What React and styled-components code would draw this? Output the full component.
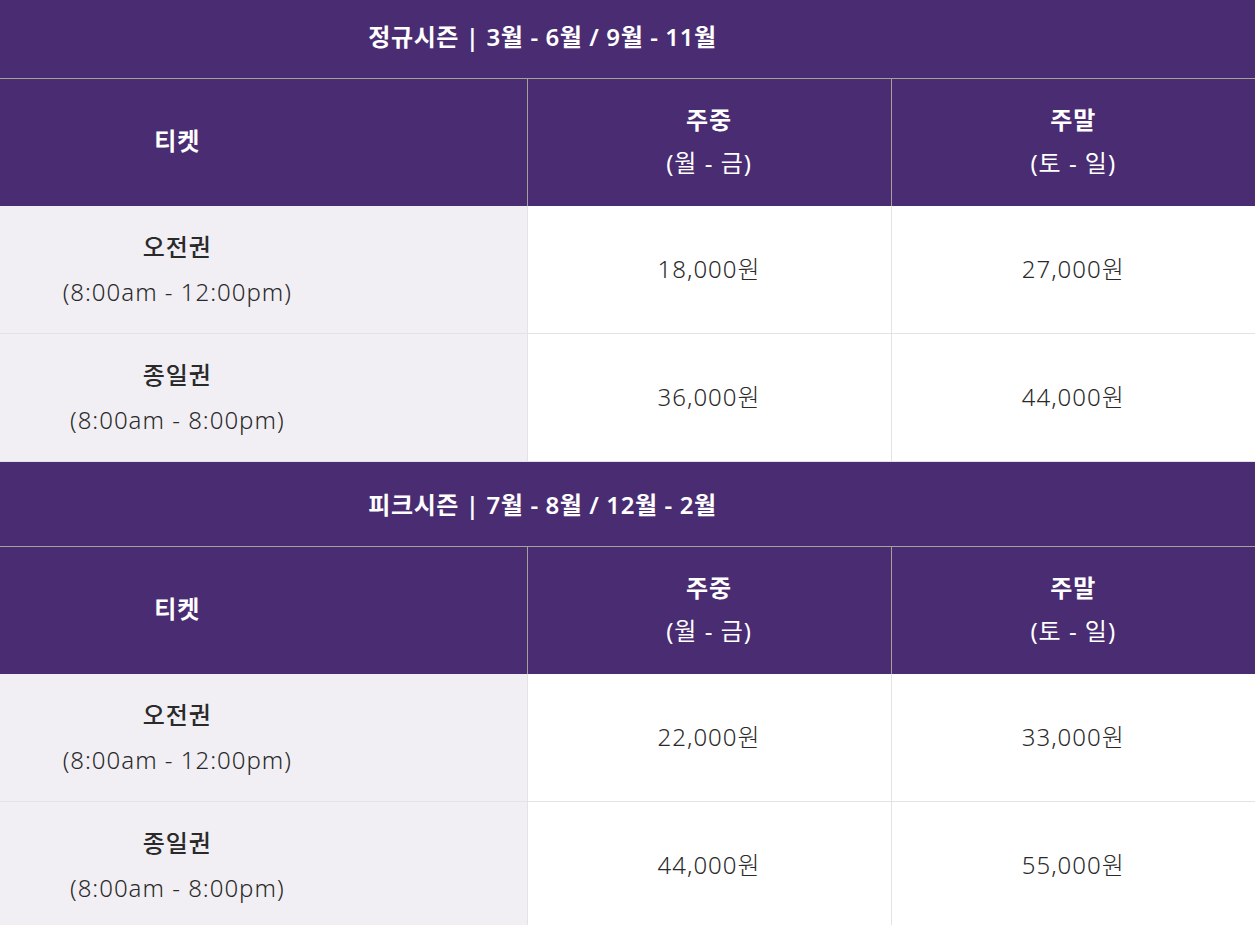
import React from 'react';
import styled, { createGlobalStyle } from 'styled-components';

const GlobalStyle = createGlobalStyle`
    html, body {
        margin: 0;
        padding: 0;
        background: #ffffff;
        overflow: hidden;
    }
    body {
        font-family: "Noto Sans", "Noto Sans CJK KR", sans-serif;
    }
`;

// 시즌별 요금 데이터
const seasons = [
    {
        title: '정규시즌 | 3월 - 6월 / 9월 - 11월',
        rows: [
            { name: '오전권', time: '(8:00am - 12:00pm)', weekday: '18,000원', weekend: '27,000원' },
            { name: '종일권', time: '(8:00am - 8:00pm)', weekday: '36,000원', weekend: '44,000원' },
        ],
    },
    {
        title: '피크시즌 | 7월 - 8월 / 12월 - 2월',
        rows: [
            { name: '오전권', time: '(8:00am - 12:00pm)', weekday: '22,000원', weekend: '33,000원' },
            { name: '종일권', time: '(8:00am - 8:00pm)', weekday: '44,000원', weekend: '55,000원' },
        ],
    },
];

const Page = styled.div`
    width: 1255px;
    margin-top: -6px;
`;

const Table = styled.table`
    width: 100%;
    border-collapse: collapse;
    table-layout: fixed;
    color: #2a2a2a;
    letter-spacing: 1px;
`;

const TitleCell = styled.th`
    height: 82px;
    padding: 0 170px 2px 0;
    background: #4a2c72;
    color: #ffffff;
    font-size: 24px;
    font-weight: 600;
    letter-spacing: 0.6px;
    text-align: center;
    border-bottom: 1px solid #a3a199;
`;

const HeadCell = styled.th`
    height: 123px;
    padding: 0 ${(p) => (p.$label ? '172px' : '0')} 4px 0;
    background: #4a2c72;
    color: #ffffff;
    font-size: 24px;
    font-weight: 400;
    line-height: 43px;
    text-align: center;
    border-left: 1px solid #a3a199;
    &:first-child {
        border-left: none;
    }
`;

const Strong = styled.span`
    display: block;
    font-weight: ${(p) => (p.$bold ? 600 : 500)};
`;

const Sub = styled.span`
    display: block;
`;

const BodyCell = styled.td`
    height: 125px;
    padding: 0 ${(p) => (p.$label ? '172px' : '0')} 2px 0;
    background: ${(p) => (p.$label ? '#f1eff4' : '#ffffff')};
    font-size: 24px;
    font-weight: 300;
    line-height: 45px;
    text-align: center;
    border-left: 1px solid #e3e3e3;
    border-bottom: 1px solid #e3e3e3;
    &:first-child {
        border-left: none;
    }
`;

const Season = ({ season }) => (
    <>
        <tr>
            <TitleCell colSpan={3}>{season.title}</TitleCell>
        </tr>
        <tr>
            <HeadCell $label>
                <Strong $bold>티켓</Strong>
            </HeadCell>
            <HeadCell>
                <Strong $bold>주중</Strong>
                <Sub>(월 - 금)</Sub>
            </HeadCell>
            <HeadCell>
                <Strong $bold>주말</Strong>
                <Sub>(토 - 일)</Sub>
            </HeadCell>
        </tr>
        {season.rows.map((row, i) => (
            <tr key={i}>
                <BodyCell $label>
                    <Strong>{row.name}</Strong>
                    <Sub>{row.time}</Sub>
                </BodyCell>
                <BodyCell>{row.weekday}</BodyCell>
                <BodyCell>{row.weekend}</BodyCell>
            </tr>
        ))}
    </>
);

const App = () => (
    <Page>
        <GlobalStyle />
        <Table>
            <colgroup>
                <col style={{ width: '42%' }} />
                <col />
                <col />
            </colgroup>
            <tbody>
                {seasons.map((season, i) => (
                    <Season key={i} season={season} />
                ))}
            </tbody>
        </Table>
    </Page>
);

export default App;
